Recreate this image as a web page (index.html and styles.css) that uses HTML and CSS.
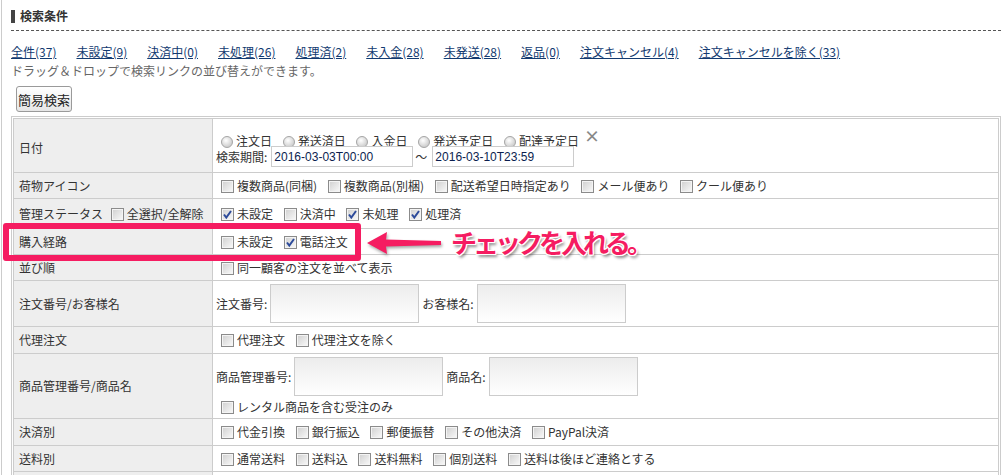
FILE: index.html
```html
<!DOCTYPE html>
<html lang="ja">
<head>
<meta charset="UTF-8">
<title>受注検索</title>
<link rel="stylesheet" href="styles.css">
</head>
<body>
<div class="page">
  <h2 class="ttl">検索条件</h2>
  <ul class="links">
    <li><a href="#">全件(37)</a></li>
    <li><a href="#">未設定(9)</a></li>
    <li><a href="#">決済中(0)</a></li>
    <li><a href="#">未処理(26)</a></li>
    <li><a href="#">処理済(2)</a></li>
    <li><a href="#">未入金(28)</a></li>
    <li><a href="#">未発送(28)</a></li>
    <li><a href="#">返品(0)</a></li>
    <li><a href="#">注文キャンセル(4)</a></li>
    <li><a href="#">注文キャンセルを除く(33)</a></li>
  </ul>
  <p class="note">ドラッグ＆ドロップで検索リンクの並び替えができます。</p>
  <button class="btn">簡易検索</button>

  <div class="box">
    <table class="cond">
      <colgroup><col class="c1"><col></colgroup>
      <tr class="date">
        <td class="lbl">日付</td>
        <td>
          <div class="radios">
            <label class="ck"><i class="rd"></i>注文日</label>
            <label class="ck"><i class="rd"></i>発送済日</label>
            <label class="ck"><i class="rd"></i>入金日</label>
            <label class="ck"><i class="rd"></i>発送予定日</label>
            <label class="ck"><i class="rd"></i>配達予定日</label><span class="clr">×</span>
          </div>
          <div class="line">
            検索期間:<input class="dt" type="text" value="2016-03-03T00:00"><span class="tilde">～</span><input class="dt" type="text" value="2016-03-10T23:59">
          </div>
        </td>
      </tr>
      <tr>
        <td class="lbl">荷物アイコン</td>
        <td>
          <label class="ck"><i class="cb"></i>複数商品(同梱)</label>
          <label class="ck"><i class="cb"></i>複数商品(別梱)</label>
          <label class="ck"><i class="cb"></i>配送希望日時指定あり</label>
          <label class="ck"><i class="cb"></i>メール便あり</label>
          <label class="ck"><i class="cb"></i>クール便あり</label>
        </td>
      </tr>
      <tr class="status">
        <td class="lbl">管理ステータス <label class="ck"><i class="cb"></i>全選択/全解除</label></td>
        <td>
          <label class="ck"><i class="cb"><svg viewBox="0 0 11 11"><path d="M2 5.5L4.3 8.5L9 2"/></svg></i>未設定</label>
          <label class="ck"><i class="cb"></i>決済中</label>
          <label class="ck"><i class="cb"><svg viewBox="0 0 11 11"><path d="M2 5.5L4.3 8.5L9 2"/></svg></i>未処理</label>
          <label class="ck"><i class="cb"><svg viewBox="0 0 11 11"><path d="M2 5.5L4.3 8.5L9 2"/></svg></i>処理済</label>
        </td>
      </tr>
      <tr>
        <td class="lbl">購入経路</td>
        <td>
          <label class="ck"><i class="cb"></i>未設定</label>
          <label class="ck"><i class="cb"><svg viewBox="0 0 11 11"><path d="M2 5.5L4.3 8.5L9 2"/></svg></i>電話注文</label>
        </td>
      </tr>
      <tr>
        <td class="lbl">並び順</td>
        <td><label class="ck"><i class="cb"></i>同一顧客の注文を並べて表示</label></td>
      </tr>
      <tr class="names">
        <td class="lbl">注文番号/お客様名</td>
        <td>
          <div class="line">注文番号:<input class="txt" type="text"><span class="sub">お客様名:</span><input class="txt" type="text"></div>
        </td>
      </tr>
      <tr class="tall">
        <td class="lbl">代理注文</td>
        <td>
          <label class="ck"><i class="cb"></i>代理注文</label>
          <label class="ck"><i class="cb"></i>代理注文を除く</label>
        </td>
      </tr>
      <tr class="items">
        <td class="lbl">商品管理番号/商品名</td>
        <td>
          <div class="line">商品管理番号:<input class="txt" type="text"><span class="sub">商品名:</span><input class="txt" type="text"></div>
          <div class="after"><label class="ck"><i class="cb"></i>レンタル商品を含む受注のみ</label></div>
        </td>
      </tr>
      <tr class="tall">
        <td class="lbl">決済別</td>
        <td>
          <label class="ck"><i class="cb"></i>代金引換</label>
          <label class="ck"><i class="cb"></i>銀行振込</label>
          <label class="ck"><i class="cb"></i>郵便振替</label>
          <label class="ck"><i class="cb"></i>その他決済</label>
          <label class="ck"><i class="cb"></i>PayPal決済</label>
        </td>
      </tr>
      <tr>
        <td class="lbl">送料別</td>
        <td>
          <label class="ck"><i class="cb"></i>通常送料</label>
          <label class="ck"><i class="cb"></i>送料込</label>
          <label class="ck"><i class="cb"></i>送料無料</label>
          <label class="ck"><i class="cb"></i>個別送料</label>
          <label class="ck"><i class="cb"></i>送料は後ほど連絡とする</label>
        </td>
      </tr>
      <tr class="rest">
        <td class="lbl"></td>
        <td></td>
      </tr>
    </table>
  </div>

  <!-- 注釈 -->
  <div class="mark"></div>
  <svg class="arrow" viewBox="0 0 84 30" width="84" height="30"><polygon points="5,15 25,4 24,11.5 79,13 79,17 24,18.5 25,26"/></svg>
  <span class="memo">チェックを入れる。</span>
</div>
</body>
</html>
```

FILE: styles.css
```css
html,body{margin:0;height:475px;overflow:hidden;background:#fff}
body{font-family:"Noto Sans CJK JP","Noto Sans",sans-serif;font-size:12px;color:#333}
.page{position:relative;margin-left:1px;border-left:1px solid #ccc;padding:0 6px 0 9px;min-height:475px}
/* 見出し */
.ttl{display:flex;align-items:center;margin:0;padding:9px 0 7px;font-size:12px;line-height:14px;font-weight:bold;color:#333;border-bottom:1px dashed #555}
.ttl::before{content:'';width:4px;height:13px;background:#444;margin-right:5px}
.links{display:flex;gap:20px;list-style:none;margin:13px 0 0;padding:0;line-height:16px}
.links a{color:#123a70;text-decoration:underline}
.note{margin:3px 0 0;line-height:16px;color:#666}
.btn{display:block;margin:7px 0 0 5px;width:56px;height:26px;padding:0;border:1px solid #9a9a9a;border-radius:3px;background:linear-gradient(#fff,#e6e6e6);font:13px "Noto Sans CJK JP",sans-serif;color:#222}
/* 条件テーブル */
.box{margin-top:4px;border:1px solid #ccc;padding:1px}
.cond{width:100%;border-collapse:collapse;table-layout:fixed}
.c1{width:199px}
.cond td{border:1px solid #ccc;padding:5px 3px 4px;line-height:16px;vertical-align:middle;white-space:nowrap}
.cond td.lbl{background:#eee;padding-left:5px}
.cond tr.date td{padding:9px 3px 5px;vertical-align:top}
.cond tr.date td.lbl{vertical-align:middle;padding-left:5px}
.cond tr.status td{padding:7px 3px 6px}
.cond tr.status td.lbl{padding-left:5px}
.cond tr.names td{padding:3px}
.cond tr.names td.lbl,.cond tr.items td.lbl{padding-left:5px}
.cond tr.tall td{padding:5px 3px}
.cond tr.tall td.lbl{padding-left:5px}
.cond tr.items td{padding:3px 3px 3px}
.cond tr.rest td{height:16px}
.radios{line-height:18px;height:18px}
.line{display:flex;align-items:center}
.after{margin-top:3px}
.ck{margin-right:3px}
.cb{display:inline-block;position:relative;box-sizing:border-box;width:13px;height:13px;margin:0 3px 0 5px;border:1px solid #8b8b8b;box-shadow:inset 0 0 0 1px #f4f4f4;background:linear-gradient(135deg,#cfcfcf,#fafafa);vertical-align:-2px}
.cb svg{position:absolute;left:0;top:0;width:11px;height:11px}
.cb path{fill:none;stroke:#2c4a9a;stroke-width:2}
.rd{display:inline-block;box-sizing:border-box;width:12px;height:12px;margin:0 3px 0 5px;border:1px solid #a6a6a6;border-radius:50%;background:radial-gradient(circle at 40% 35%,#fff,#d0d0d0 70%);vertical-align:-2px}
.clr{display:inline-block;margin-left:2px;font-size:16px;font-weight:bold;color:#888;line-height:14px;vertical-align:4px}
.dt{box-sizing:border-box;width:142px;height:21px;margin:0 0 0 4px;padding:0 2px;border:1px solid #ccc;background:#fff;font:12px "Liberation Sans",sans-serif;color:#0b1e4f}
.tilde{margin:0 1px 0 2px}
.txt{box-sizing:border-box;width:149px;height:39px;margin:0 0 0 3px;border:1px solid #ccc;background:linear-gradient(#ececec,#fff)}
.sub{margin-left:3px}
/* 注釈 */
.mark{position:absolute;left:1px;top:223px;width:358px;height:38px;box-sizing:border-box;border:6px solid #f51c61;border-radius:3px}
.arrow{position:absolute;left:360px;top:228px;filter:drop-shadow(1px 2px 1.5px rgba(0,0,0,.35))}
.arrow polygon{fill:#f51c61}
.memo{position:absolute;left:449px;top:227px;font-size:26px;line-height:30px;font-weight:bold;letter-spacing:-4px;color:#f51c61;text-shadow:1px 0 0 #fff,-1px 0 0 #fff,0 1px 0 #fff,0 -1px 0 #fff,1px 1px 0 #fff,-1px -1px 0 #fff,1px -1px 0 #fff,-1px 1px 0 #fff,2px 3px 3px rgba(0,0,0,.45)}
```
